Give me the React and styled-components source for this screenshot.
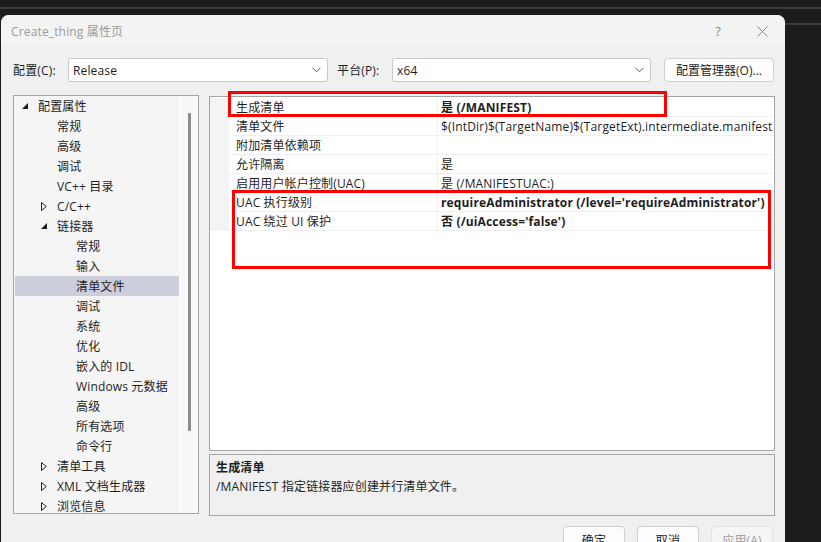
import React from 'react'
import styled, { createGlobalStyle } from 'styled-components'

const GlobalStyle = createGlobalStyle`
  html, body {
    margin: 0;
    padding: 0;
    background: #1c1c1c;
  }
  body {
    font-family: "Open Sans", "Noto Sans CJK SC", sans-serif;
    font-size: 12px;
    letter-spacing: 0.15px;
    color: #1e1e1e;
  }
`

const treeItems = [
  { label: '配置属性', level: 0, arrow: 'open' },
  { label: '常规', level: 1 },
  { label: '高级', level: 1 },
  { label: '调试', level: 1 },
  { label: 'VC++ 目录', level: 1 },
  { label: 'C/C++', level: 1, arrow: 'closed' },
  { label: '链接器', level: 1, arrow: 'open' },
  { label: '常规', level: 2 },
  { label: '输入', level: 2 },
  { label: '清单文件', level: 2, selected: true },
  { label: '调试', level: 2 },
  { label: '系统', level: 2 },
  { label: '优化', level: 2 },
  { label: '嵌入的 IDL', level: 2 },
  { label: 'Windows 元数据', level: 2 },
  { label: '高级', level: 2 },
  { label: '所有选项', level: 2 },
  { label: '命令行', level: 2 },
  { label: '清单工具', level: 1, arrow: 'closed' },
  { label: 'XML 文档生成器', level: 1, arrow: 'closed' },
  { label: '浏览信息', level: 1, arrow: 'closed' },
]

const props = [
  { name: '生成清单', value: '是 (/MANIFEST)', bold: true },
  { name: '清单文件', value: '$(IntDir)$(TargetName)$(TargetExt).intermediate.manifest' },
  { name: '附加清单依赖项', value: '' },
  { name: '允许隔离', value: '是' },
  { name: '启用用户帐户控制(UAC)', value: '是 (/MANIFESTUAC:)' },
  { name: 'UAC 执行级别', value: "requireAdministrator (/level='requireAdministrator')", bold: true },
  { name: 'UAC 绕过 UI 保护', value: "否 (/uiAccess='false')", bold: true },
]

function App() {
  return (
    <Page>
      <GlobalStyle />
      <TopStrip />
      <Desk>
        <Dialog>
          <TitleBar>
            <Title>Create_thing 属性页</Title>
            <TitleButtons>
              <Help>?</Help>
              <svg width="11" height="11" viewBox="0 0 11 11">
                <path d="M0.5 0.5 L10.5 10.5 M10.5 0.5 L0.5 10.5" stroke="#8a8a8a" strokeWidth="1" fill="none" />
              </svg>
            </TitleButtons>
          </TitleBar>

          <ConfigRow>
            <Label $w={55}>配置(C):</Label>
            <Select $w={260}>
              <span>Release</span>
              <Chevron />
            </Select>
            <Label $w={55} $ml={9}>平台(P):</Label>
            <Select $w={259}>
              <span>x64</span>
              <Chevron />
            </Select>
            <ManagerButton>配置管理器(O)...</ManagerButton>
          </ConfigRow>

          <Main>
            <Tree>
              <TreeList>
                {treeItems.map((item, i) => (
                  <TreeRow key={i} $level={item.level} $selected={item.selected}>
                    <ArrowSlot>
                      {item.arrow === 'open' && (
                        <svg width="6" height="6" viewBox="0 0 6 6">
                          <polygon points="6,0 6,6 0,6" fill="#1e1e1e" />
                        </svg>
                      )}
                      {item.arrow === 'closed' && (
                        <svg width="6" height="9" viewBox="0 0 6 9">
                          <polygon points="0.5,0.5 5.3,4.5 0.5,8.5" fill="none" stroke="#1e1e1e" strokeWidth="1" />
                        </svg>
                      )}
                    </ArrowSlot>
                    {item.label}
                  </TreeRow>
                ))}
              </TreeList>
              <ScrollTrack>
                <ScrollThumb />
              </ScrollTrack>
            </Tree>

            <RightCol>
              <Grid>
                {props.map((p, i) => (
                  <PropRow key={i}>
                    <Gutter />
                    <NameCell>{p.name}</NameCell>
                    <ValueCell $bold={p.bold}>{p.value}</ValueCell>
                  </PropRow>
                ))}
              </Grid>
              <Description>
                <DescTitle>生成清单</DescTitle>
                <div>/MANIFEST 指定链接器应创建并行清单文件。</div>
              </Description>
            </RightCol>
          </Main>

          <Footer>
            <DialogButton>确定</DialogButton>
            <DialogButton>取消</DialogButton>
            <DialogButton $disabled>应用(A)</DialogButton>
          </Footer>
        </Dialog>
        <RightStrip />
      </Desk>

      <Marker style={{ left: 228, top: 91, width: 439, height: 26 }} />
      <Marker style={{ left: 232, top: 190, width: 539, height: 79 }} />
    </Page>
  )
}

function Chevron() {
  return (
    <svg width="9" height="6" viewBox="0 0 9 6">
      <path d="M0.5 0.8 L4.5 4.8 L8.5 0.8" stroke="#5a5a5a" strokeWidth="1" fill="none" />
    </svg>
  )
}

const Page = styled.div`
  position: relative;
  width: 821px;
  height: 542px;
  overflow: hidden;
  background: #1c1c1c;
`

const TopStrip = styled.div`
  height: 7px;
  border-bottom: 2px solid #3a3a3a;
`

const Desk = styled.div`
  display: flex;
  padding-top: 6px;
`

const RightStrip = styled.div`
  flex: 1;
  margin-top: 8px;
  height: 0;
  border-top: 2px solid #3a3a3a;
`

const Dialog = styled.div`
  margin-left: 1px;
  width: 784px;
  height: 540px;
  background: #f0f0f0;
  border-radius: 8px 8px 0 0;
  display: flex;
  flex-direction: column;
`

const TitleBar = styled.div`
  height: 32px;
  display: flex;
  align-items: center;
  justify-content: space-between;
  padding: 0 17px 0 10px;
  background: #f3f3f3;
  border-radius: 8px 8px 0 0;
`

const Title = styled.span`
  color: #9b9b9b;
  font-size: 12px;
`

const TitleButtons = styled.div`
  display: flex;
  align-items: center;
  gap: 36px;
`

const Help = styled.span`
  color: #8a8a8a;
  font-size: 13px;
`

const ConfigRow = styled.div`
  display: flex;
  align-items: center;
  padding: 11px 0 0 12px;
`

const Label = styled.span`
  width: ${p => p.$w}px;
  margin-left: ${p => p.$ml || 0}px;
  white-space: nowrap;
`

const Select = styled.div`
  width: ${p => p.$w}px;
  height: 24px;
  box-sizing: border-box;
  border: 1px solid #c9c9c9;
  border-radius: 2px;
  background: #ffffff;
  display: flex;
  align-items: center;
  justify-content: space-between;
  padding: 0 6px 0 4px;
`

const ManagerButton = styled.div`
  margin-left: 13px;
  width: 110px;
  height: 24px;
  box-sizing: border-box;
  border: 1px solid #d0d0d0;
  border-radius: 4px;
  background: #fdfdfd;
  display: flex;
  align-items: center;
  justify-content: center;
  white-space: nowrap;
  letter-spacing: 0;
`

const Main = styled.div`
  display: flex;
  gap: 10px;
  padding: 13px 0 0 12px;
`

const Tree = styled.div`
  width: 186px;
  height: 419px;
  box-sizing: border-box;
  border: 1px solid #a5a5a5;
  background: #f5f5f5;
  display: flex;
  overflow: hidden;
`

const TreeList = styled.div`
  flex: 1;
  padding-left: 1px;
`

const TreeRow = styled.div`
  height: 20px;
  display: flex;
  align-items: center;
  padding-left: ${p => 7 + p.$level * 19}px;
  background: ${p => (p.$selected ? '#cccedb' : 'transparent')};
  white-space: nowrap;
`

const ArrowSlot = styled.span`
  width: 16px;
  display: flex;
  align-items: center;
`

const ScrollTrack = styled.div`
  width: 18px;
  background: #f8f8f8;
  border-left: 1px solid #ffffff;
  display: flex;
  justify-content: center;
  padding-top: 17px;
`

const ScrollThumb = styled.div`
  width: 3px;
  height: 318px;
  background: #8c8c8c;
`

const RightCol = styled.div`
  display: flex;
  flex-direction: column;
  gap: 3px;
  margin-top: 1px;
`

const Grid = styled.div`
  width: 566px;
  height: 355px;
  box-sizing: border-box;
  border: 1px solid #a5a5a5;
  background: #ffffff;
  padding-top: 1px;
  overflow: hidden;
`

const PropRow = styled.div`
  display: flex;
  height: 19px;
`

const Gutter = styled.div`
  width: 19px;
  background: #f4f4f4;
`

const NameCell = styled.div`
  width: 209px;
  box-sizing: border-box;
  padding-left: 7px;
  border-bottom: 1px solid #eef0f3;
  border-right: 1px solid #eef0f3;
  display: flex;
  align-items: center;
  white-space: nowrap;
  overflow: hidden;
`

const ValueCell = styled.div`
  flex: 1;
  padding-left: 3px;
  border-bottom: 1px solid #eef0f3;
  display: flex;
  align-items: center;
  white-space: nowrap;
  overflow: hidden;
  font-weight: ${p => (p.$bold ? 700 : 400)};
`

const Description = styled.div`
  width: 566px;
  height: 62px;
  box-sizing: border-box;
  border: 1px solid #a5a5a5;
  background: #f0f0f0;
  padding: 3px 6px;
  line-height: 19px;
`

const DescTitle = styled.div`
  font-weight: 700;
`

const Footer = styled.div`
  display: flex;
  justify-content: flex-end;
  gap: 12px;
  padding: 10px 12px 0 0;
`

const DialogButton = styled.div`
  width: 62px;
  height: 24px;
  box-sizing: border-box;
  border: 1px solid ${p => (p.$disabled ? '#e3e3e3' : '#cfcfcf')};
  border-radius: 4px;
  background: ${p => (p.$disabled ? '#f5f5f5' : '#fdfdfd')};
  color: ${p => (p.$disabled ? '#a0a0a0' : '#1e1e1e')};
  display: flex;
  align-items: center;
  justify-content: center;
  padding-top: 4px;
`

const Marker = styled.div`
  position: absolute;
  box-sizing: border-box;
  border: 3px solid #ff0000;
  pointer-events: none;
`

export default App
